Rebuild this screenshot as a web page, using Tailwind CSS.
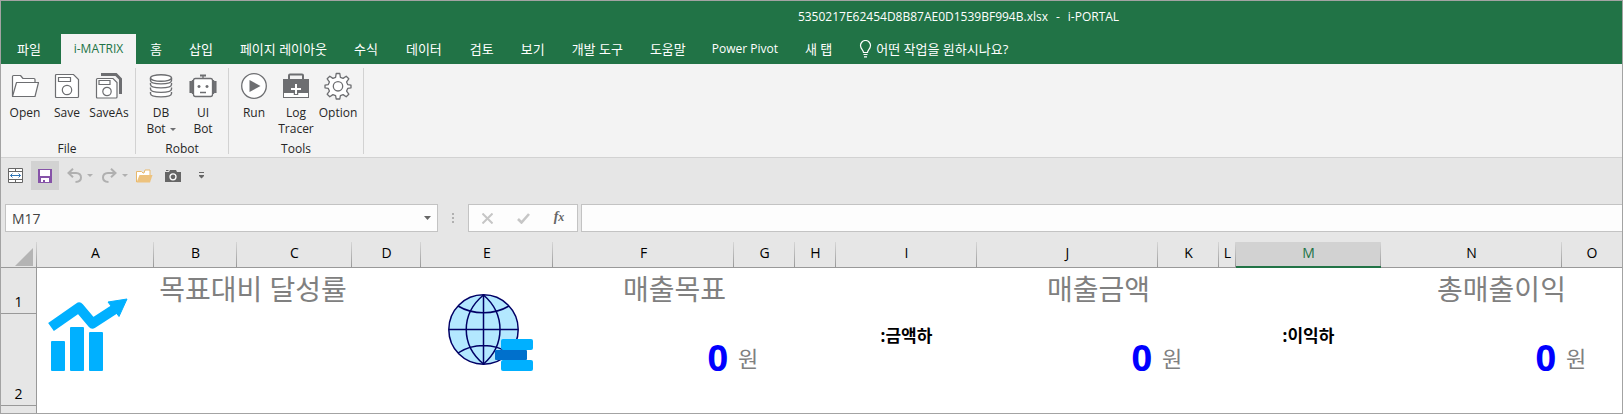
<!DOCTYPE html>
<html lang="ko">
  <head>
    <meta charset="UTF-8" />
    <meta name="viewport" content="width=device-width, initial-scale=1" />
    <title>i-PORTAL</title>
    <script src="https://cdn.jsdelivr.net/npm/@tailwindcss/browser@4"></script>
  </head>
  <body
    class="min-h-screen flex flex-col border border-[#a3a3a3] bg-[#e6e6e6] text-[12px] leading-4 text-[#262626] font-['Open_Sans','Noto_Sans_CJK_KR',sans-serif] overflow-x-hidden"
  >
    <!-- Title bar and tabs -->
    <header class="bg-[#217346] text-white">
      <h1 class="h-8 pl-[294px] mb-px flex items-center justify-center gap-2 whitespace-pre">
        <span>5350217E62454D8B87AE0D1539BF994B.xlsx</span>
        <span>-</span>
        <span>i-PORTAL</span>
      </h1>
      <nav class="h-[30px] flex items-stretch whitespace-nowrap text-[13px]">
        <button class="w-[60px] pr-1">파일</button>
        <button class="w-[75px] mr-px bg-[#f3f3f3] text-[#217346] text-[12px]">i-MATRIX</button>
        <button class="px-[13px]">홈</button>
        <button class="px-[14px]">삽입</button>
        <button class="px-[13px]">페이지 레이아웃</button>
        <button class="px-[14px]">수식</button>
        <button class="px-[14px]">데이터</button>
        <button class="px-[14px]">검토</button>
        <button class="px-[13px]">보기</button>
        <button class="px-[14px]">개발 도구</button>
        <button class="px-[13px]">도움말</button>
        <button class="px-[13px] text-[12px]">Power Pivot</button>
        <button class="px-[14px]">새 탭</button>
        <button class="px-[13px] flex items-center gap-1">
          <svg class="w-[13px] h-[18px]" viewBox="0 0 13 18" fill="none" stroke="currentColor" stroke-width="1.2">
            <path d="M4.5 12.5c0-2.5-3-3.500-3-7a5 5 0 0 1 10 0c0 3.500-3 4.500-3 7zM4.500 14.500h4M5 16.800h3" />
          </svg>
          어떤 작업을 원하시나요?
        </button>
      </nav>
    </header>

    <!-- Ribbon -->
    <div class="h-[94px] pt-1 flex bg-[#f3f3f3] border-b border-[#d2d2d2]">
      <section class="h-[86px] pl-[3px] pr-[5px] flex flex-col border-r border-[#d2d2d2]">
        <div class="flex flex-1">
          <button class="w-[42px] pt-1 flex flex-col items-center">
            <svg class="w-7 h-7 mb-[5px]" viewBox="0 0 28 28" fill="#fff" stroke="#6d6e71" stroke-width="1.2" stroke-linejoin="round">
              <path d="M1.500 24V4.500q0-1 1-1h7l2.500 3h11q1 0 1 1V11" />
              <path d="M5.500 10.500H27.500L24 24.500H1.500z" />
            </svg>
            Open
          </button>
          <button class="w-[42px] pt-1 flex flex-col items-center">
            <svg class="w-7 h-7 mb-[5px]" viewBox="0 0 28 28" fill="#fff" stroke="#6d6e71" stroke-width="1.2">
              <path d="M3.500 2.500h17l5 5v17q0 1-1 1h-21q-1 0-1-1v-21q0-1 1-1z" />
              <path d="M5.500 5.500h12v4h-12z" />
              <circle cx="14" cy="18" r="4.700" />
            </svg>
            Save
          </button>
          <button class="w-[42px] pt-1 flex flex-col items-center">
            <svg class="w-7 h-7 mb-[5px]" viewBox="0 0 28 28" fill="#fff" stroke="#6d6e71" stroke-width="1.2">
              <path d="M6 2.500h15l4.500 4.500v15" fill="none" stroke-width="3" />
              <path d="M2.500 6.500h15.500l4 4v14.500q0 1-1 1h-18.500q-1 0-1-1v-17.500q0-1 1-1z" />
              <path d="M4 8.500h11v4h-11z" />
              <circle cx="12" cy="19.500" r="4.200" />
            </svg>
            SaveAs
          </button>
        </div>
        <h2 class="text-center leading-[10px]">File</h2>
      </section>
      <section class="h-[86px] px-1 flex flex-col border-r border-[#d2d2d2]">
        <div class="flex flex-1">
          <button class="w-[42px] pt-1 flex flex-col items-center">
            <svg class="w-7 h-7 mb-[5px]" viewBox="0 0 28 28" fill="#fff" stroke="#6d6e71" stroke-width="1.4">
              <path d="M3.500 20v1.500c0 4.500 21 4.500 21 0V20" />
              <path d="M3.500 15.500V17c0 4.500 21 4.500 21 0v-1.500" />
              <path d="M3.500 11v1.500c0 4.500 21 4.500 21 0V11" />
              <path d="M3.500 6v2.500c0 4.500 21 4.500 21 0V6" />
              <ellipse cx="14" cy="6" rx="10.500" ry="3.300" />
            </svg>
            DB
            <span class="flex items-center gap-1">Bot
              <svg class="w-[6px] h-[3px]" viewBox="0 0 6 3"><path d="M0 0h6L3 3z" fill="#6d6e71" /></svg>
            </span>
          </button>
          <button class="w-[42px] pt-1 flex flex-col items-center">
            <svg class="w-7 h-7 mb-[5px]" viewBox="0 0 28 28" fill="none" stroke="#6d6e71" stroke-width="1.300">
              <path d="M1.700 9v12M26.300 9v12" stroke-width="2.500" />
              <path d="M3.500 8v14M24.500 8v14" />
              <path d="M11 3.500h6" stroke-width="2" />
              <path d="M14 4v3" />
              <rect x="4.500" y="6.500" width="19" height="18" rx="2" fill="#fff" />
              <path d="M8.500 14.500h3M16.500 14.500h3M11 20.500h6" stroke-width="1.500" />
              <path d="M10 13v3M18 13v3" stroke-width="1.500" />
            </svg>
            UI
            <span>Bot</span>
          </button>
        </div>
        <h2 class="text-center leading-[10px]">Robot</h2>
      </section>
      <section class="h-[86px] px-1 flex flex-col border-r border-[#d2d2d2]">
        <div class="flex flex-1">
          <button class="w-[42px] pt-1 flex flex-col items-center">
            <svg class="w-7 h-7 mb-[5px]" viewBox="0 0 28 28">
              <circle cx="14" cy="14" r="12.300" fill="#fff" stroke="#6d6e71" stroke-width="1.300" />
              <path d="M9.500 8v12L20.500 14z" fill="#6d6e71" />
            </svg>
            Run
          </button>
          <button class="w-[42px] pt-1 flex flex-col items-center">
            <svg class="w-7 h-7 mb-[5px]" viewBox="0 0 28 28">
              <path d="M7 7V3.500q0-1 1-1h12q1 0 1 1V7" fill="none" stroke="#6d6e71" stroke-width="2" />
              <rect x="1" y="7" width="26" height="19" fill="#6d6e71" />
              <path d="M2 21h24v4H2z" fill="#fff" />
              <path d="M14 14v9" stroke="#6d6e71" stroke-width="4.500" />
              <path d="M14 12v10M9 17h10" stroke="#fff" stroke-width="2" />
            </svg>
            Log
            <span>Tracer</span>
          </button>
          <button class="w-[42px] pt-1 flex flex-col items-center">
            <svg class="w-7 h-7 mb-[5px]" viewBox="0 0 28 28" fill="#fff" stroke="#6d6e71" stroke-width="1.300" stroke-linejoin="round">
              <path d="M12.200 1.500h3.600l.6 3.800 2.700 1.100 3.100-2.200 2.600 2.600-2.200 3.100 1.100 2.700 3.300.6v2.600l-3.300.6-1.100 2.700 2.200 3.100-2.600 2.600-3.100-2.200-2.700 1.100-.6 3.300h-3.600l-.6-3.300-2.700-1.100-3.100 2.200-2.600-2.600 2.200-3.100-1.100-2.700-3.300-.6v-2.600l3.300-.6 1.100-2.700-2.200-3.100 2.600-2.600 3.100 2.200 2.700-1.100z" />
              <circle cx="14" cy="14.300" r="4.700" />
            </svg>
            Option
          </button>
        </div>
        <h2 class="text-center leading-[10px]">Tools</h2>
      </section>
    </div>

    <!-- Quick access toolbar -->
    <div class="h-[46px] pt-[3px] pl-[7px] flex items-start">
      <button class="h-[29px] mr-2" aria-label="Column width">
        <svg class="w-[15px] h-[15px]" viewBox="0 0 15 15" fill="none" stroke="#666">
          <path d="M.5.500h14v14H.5zM.5 3.500h14M.5 11.500h14M7.500.500v3M7.500 11.500v3" fill="#fff" />
          <path d="M2.500 7.500h10M4.500 5.500l-2 2 2 2M10.500 5.500l2 2-2 2" stroke="#2e74b5" />
        </svg>
      </button>
      <button class="w-7 h-[29px] mr-2 flex items-center justify-center bg-[#d2d2d2]" aria-label="Save">
        <svg class="w-[14px] h-[14px]" viewBox="0 0 14 14">
          <path d="M0 0h14v14H0z" fill="#8653a8" />
          <path d="M2 1h10v6H2zM3 9h8v4H7v-2H5v2H3z" fill="#fff" />
        </svg>
      </button>
      <button class="h-[29px] mr-[9px] flex items-center gap-[5px]" aria-label="Undo">
        <svg class="w-[15px] h-[15px]" viewBox="0 0 15 15" fill="none" stroke="#b0b0b0" stroke-width="2">
          <path d="M6 .800L1.500 5l4.500 4.200M1.500 5H9q5 .200 5 4.500T8.500 14" />
        </svg>
        <svg class="w-[6px] h-[3px]" viewBox="0 0 6 3"><path d="M0 0h6L3 3z" fill="#b0b0b0" /></svg>
      </button>
      <button class="h-[29px] mr-2 flex items-center gap-[5px]" aria-label="Redo">
        <svg class="w-[15px] h-[15px]" viewBox="0 0 15 15" fill="none" stroke="#b0b0b0" stroke-width="2">
          <path d="M9 .800L13.500 5 9 9.200M13.500 5H6Q1 5.200 1 9.500T6.500 14" />
        </svg>
        <svg class="w-[6px] h-[3px]" viewBox="0 0 6 3"><path d="M0 0h6L3 3z" fill="#b0b0b0" /></svg>
      </button>
      <button class="h-[29px] mr-3" aria-label="Open">
        <svg class="w-[17px] h-[14px]" viewBox="0 0 17 14">
          <path d="M.5 13V2.500h5L7 4h1l1-3h5v6" fill="#fff" stroke="#e8b96c" />
          <path d="M3.500 6H16.500L14 13.500H.5z" fill="#edc27d" />
        </svg>
      </button>
      <button class="h-[29px] mr-[18px]" aria-label="Camera">
        <svg class="w-4 h-[14px]" viewBox="0 0 16 14">
          <path d="M0 3h4l1-2h6l1 2h4v10H0z" fill="#666" />
          <path d="M1 1.500h2.500" stroke="#666" />
          <circle cx="8" cy="7.800" r="3" fill="#666" stroke="#fff" stroke-width="1.300" />
        </svg>
      </button>
      <button class="h-[29px]" aria-label="Customize toolbar">
        <svg class="w-[5px] h-[7px]" viewBox="0 0 5 7"><path d="M0 0h5v1H0zM0 3h5v1L2.500 6.500 0 4z" fill="#666" /></svg>
      </button>
    </div>

    <!-- Name box and formula bar -->
    <div class="h-7 mb-[10px] pl-1 flex">
      <div class="w-[433px] flex items-center bg-[#fdfdfd] border border-[#c3c3c3]">
        <input class="flex-1 min-w-0 h-full pl-[6px] text-[14px] text-[#444] outline-none" aria-label="Name box" value="M17" />
        <button class="px-[6px] h-full" aria-label="Names">
          <svg class="w-[7px] h-1" viewBox="0 0 7 4"><path d="M0 0h7L3.500 4z" fill="#666" /></svg>
        </button>
      </div>
      <div class="w-[30px] flex flex-col items-center justify-center gap-[2px]">
        <span class="size-[2px] bg-[#b0b0b0]"></span>
        <span class="size-[2px] bg-[#b0b0b0]"></span>
        <span class="size-[2px] bg-[#b0b0b0]"></span>
      </div>
      <div class="w-[110px] mr-[3px] flex items-center bg-[#fdfdfd] border border-[#c3c3c3]">
        <button class="flex-1 flex justify-center" aria-label="Cancel">
          <svg class="w-[11px] h-[11px]" viewBox="0 0 11 11" stroke="#c6c6c6" stroke-width="2"><path d="M.5.500l10 10M10.500.500l-10 10" /></svg>
        </button>
        <button class="flex-1 flex justify-center" aria-label="Enter">
          <svg class="w-[13px] h-[11px]" viewBox="0 0 13 11" fill="none" stroke="#c6c6c6" stroke-width="2.600"><path d="M1 6l3.500 3.500L12 1" /></svg>
        </button>
        <button class="flex-1 pb-[2px] text-[14px] leading-4 italic font-bold text-[#666] font-['Liberation_Serif',serif]" aria-label="Insert function">f<span class="text-[12px]">x</span></button>
      </div>
      <input class="flex-1 min-w-0 px-2 text-[14px] bg-[#fdfdfd] border border-r-0 border-[#c3c3c3] outline-none" aria-label="Formula bar" />
    </div>

    <!-- Sheet -->
    <table class="w-full flex-1 table-fixed border-separate border-spacing-0 bg-white text-[#808080]">
      <colgroup>
        <col class="w-9" />
        <col class="w-[117px]" />
        <col class="w-[83px]" />
        <col class="w-[115px]" />
        <col class="w-[69px]" />
        <col class="w-[132px]" />
        <col class="w-[181px]" />
        <col class="w-[61px]" />
        <col class="w-[41px]" />
        <col class="w-[141px]" />
        <col class="w-[181px]" />
        <col class="w-[61px]" />
        <col class="w-[17px]" />
        <col class="w-[145px]" />
        <col class="w-[181px]" />
        <col />
      </colgroup>
      <thead>
        <tr
          class="h-[26px] bg-[#e6e6e6] text-[14px] leading-5 text-black [&>th]:pb-1 [&>th]:font-normal [&>th]:border-b [&>th]:border-[#999] [&>th]:bg-[linear-gradient(to_bottom,#d6d6d6,#999)] [&>th]:bg-[length:1px_100%] [&>th]:bg-right [&>th]:bg-no-repeat"
        >
          <th class="pb-0!" aria-label="Select all">
            <svg class="w-[18px] h-[18px] ml-[14px] mt-1" viewBox="0 0 18 18"><path d="M18 0v18H0z" fill="#b4b4b4" /></svg>
          </th>
          <th>A</th>
          <th>B</th>
          <th>C</th>
          <th>D</th>
          <th>E</th>
          <th>F</th>
          <th>G</th>
          <th>H</th>
          <th>I</th>
          <th>J</th>
          <th>K</th>
          <th>L</th>
          <th class="bg-[#d2d2d2] text-[#217346] border-b-2! border-[#217346]! pb-[3px]!">M</th>
          <th>N</th>
          <th class="bg-none!">O</th>
        </tr>
      </thead>
      <tbody class="[&_th]:bg-[#e6e6e6] [&_th]:text-[14px] [&_th]:leading-5 [&_th]:font-normal [&_th]:text-black [&_th]:align-bottom [&_th]:border-r [&_th]:border-b [&_th]:border-[#999] [&_td]:whitespace-nowrap">
        <tr class="h-[46px] text-[28px] leading-8">
          <th class="pb-px">1</th>
          <td rowspan="2" class="align-top">
            <svg class="w-20 h-[74px] ml-[11px] mt-[30px]" viewBox="0 0 80 74" fill="#00b0ff">
              <path d="M3 29L31 9.500 44.500 25.500 70 9" fill="none" stroke="#00b0ff" stroke-width="10" stroke-linejoin="round" />
              <path d="M60 4L79 1 71 18.500z" stroke="#00b0ff" stroke-linejoin="round" />
              <rect x="3" y="43" width="14" height="30" rx="1" />
              <rect x="22" y="29" width="14" height="44" rx="1" />
              <rect x="41" y="34" width="14" height="39" rx="1" />
            </svg>
          </td>
          <td colspan="2" class="pb-1 text-center">목표대비 달성률</td>
          <td></td>
          <td rowspan="2" class="align-top">
            <svg class="w-[86px] h-[78px] ml-[27px] mt-[25px]" viewBox="0 0 86 78">
              <g fill="none" stroke="#000066" stroke-width="1.500">
                <circle cx="35.500" cy="36.500" r="34.700" fill="#b3e8ff" />
                <path d="M35.500 2v69M1 36.500h69M10 13c15 9 36 9 51 0M10 60c15-10 36-10 51 0" />
                <path d="M35.500 2c-23 19-23 50 0 69M35.500 2c22 19 22 50 0 69" />
              </g>
              <rect x="53" y="46" width="32" height="11" rx="2" fill="#00b0ff" />
              <rect x="47" y="57" width="32" height="10" rx="1" fill="#0070cc" />
              <rect x="53" y="67" width="32" height="11" rx="2" fill="#00b0ff" />
            </svg>
          </td>
          <td class="pr-2 pb-1 text-right">매출목표</td>
          <td colspan="3"></td>
          <td class="pr-2 pb-1 text-right">매출금액</td>
          <td colspan="3"></td>
          <td colspan="2" class="pb-1 text-center">총매출이익</td>
        </tr>
        <tr class="h-[92px] text-[22px] leading-8">
          <th class="pb-px">2</th>
          <td colspan="3"></td>
          <td class="pr-[6px] pb-1 text-right text-[36px] font-bold text-[#0000ff]">0</td>
          <td class="pl-1 pb-[5px]">원</td>
          <td></td>
          <td class="pt-[10px] align-top text-center text-[17px] leading-6 font-bold text-black">:금액하</td>
          <td class="pr-[6px] pb-1 text-right text-[36px] font-bold text-[#0000ff]">0</td>
          <td class="pl-1 pb-[5px]">원</td>
          <td></td>
          <td class="pt-[10px] align-top text-center text-[17px] leading-6 font-bold text-black">:이익하</td>
          <td class="pr-[6px] pb-1 text-right text-[36px] font-bold text-[#0000ff]">0</td>
          <td class="pl-1 pb-[5px]">원</td>
        </tr>
        <tr class="h-[7px]">
          <th class="border-b-0!"></th>
          <td colspan="15"></td>
        </tr>
      </tbody>
    </table>
  </body>
</html>
